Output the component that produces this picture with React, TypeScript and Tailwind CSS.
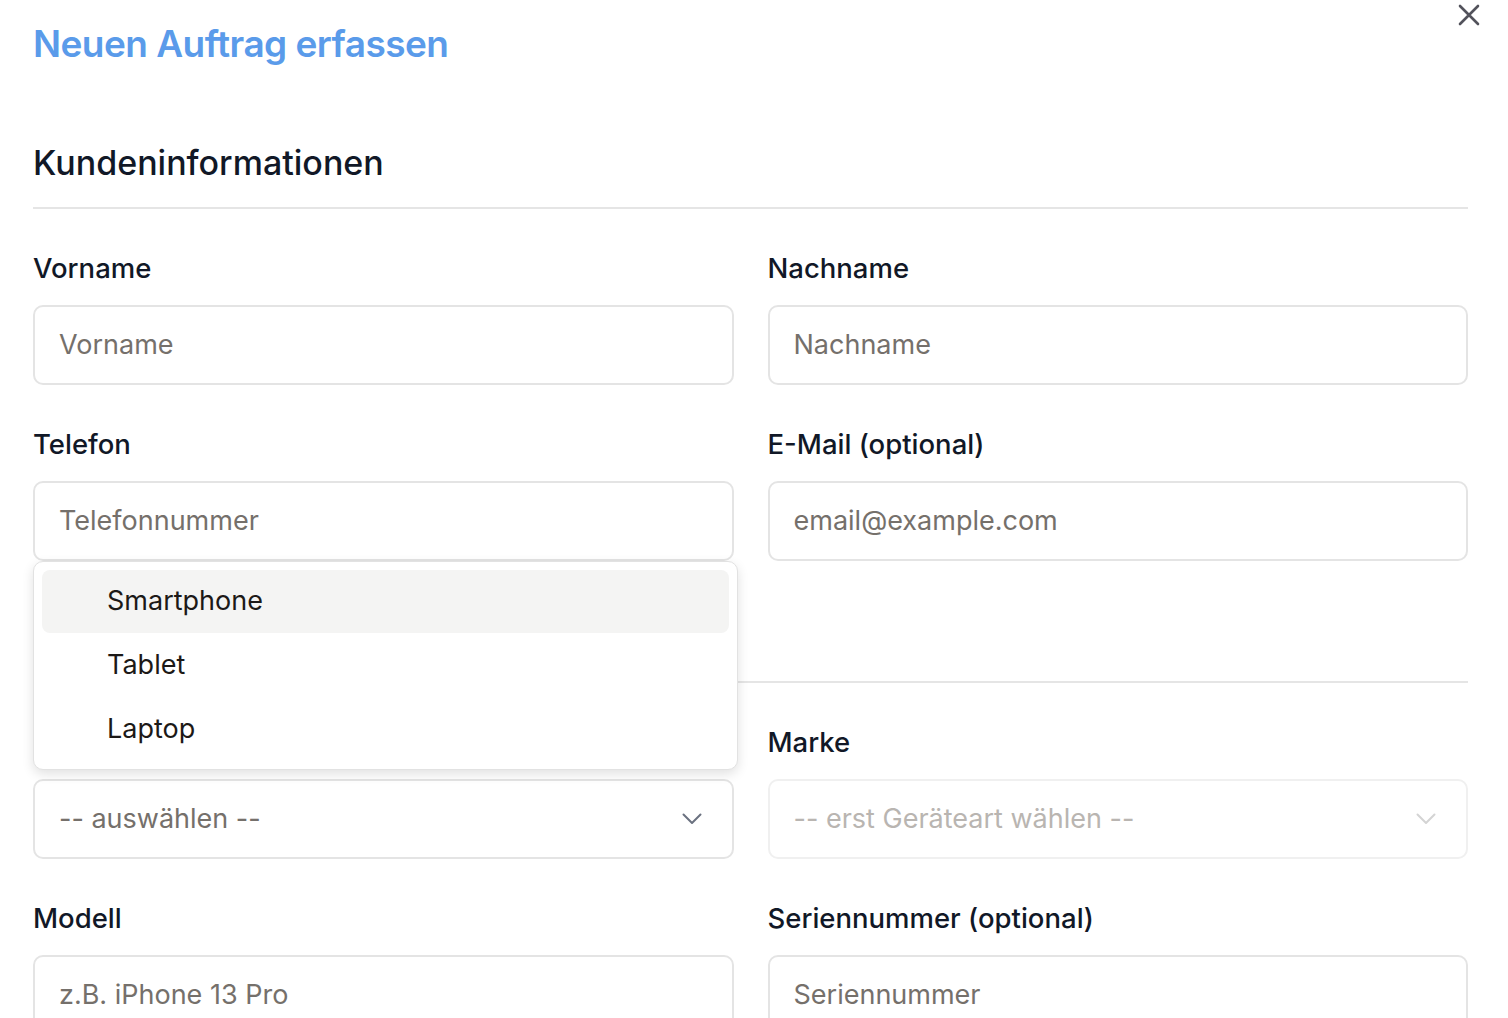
import React from 'react'

function Field({ label, placeholder }: { label: string; placeholder: string }) {
  return (
    <div className="flex flex-col">
      <label className="text-[27.5px] leading-[36px] font-medium text-[#111827] mb-[19px]">{label}</label>
      <div className="h-[80px] rounded-[10px] border-2 border-[#e4e4e4] bg-white flex items-center px-6">
        <span className="text-[27px] text-[#75706b]">{placeholder}</span>
      </div>
    </div>
  )
}

function SelectField({ label, placeholder, disabled }: { label: string; placeholder: string; disabled?: boolean }) {
  return (
    <div className="flex flex-col">
      <label className="text-[27.5px] leading-[36px] font-medium text-[#111827] mb-[19px]">{label}</label>
      <div
        className={
          disabled
            ? 'h-[80px] rounded-[10px] border-2 border-[#f0f0f0] bg-white flex items-center justify-between pl-6 pr-[30px]'
            : 'h-[80px] rounded-[10px] border-2 border-[#e4e4e4] bg-white flex items-center justify-between pl-6 pr-[30px]'
        }
      >
        <span className={disabled ? 'text-[27px] text-[#b9b5b1]' : 'text-[27px] text-[#75706b]'}>{placeholder}</span>
        <svg width="20" height="12" viewBox="0 0 20 12" fill="none">
          <path
            d="M1.5 1.5 L10 10 L18.5 1.5"
            stroke={disabled ? '#d4d4d4' : '#6b7280'}
            strokeWidth="2"
            strokeLinecap="round"
            strokeLinejoin="round"
          />
        </svg>
      </div>
    </div>
  )
}

function SectionHeading({ children }: { children: React.ReactNode }) {
  return (
    <h2 className="text-[34px] leading-[44px] font-medium text-[#111827] pb-[22px] border-b-2 border-[#e5e5e5] mb-[41px]">
      {children}
    </h2>
  )
}

export default function App() {
  return (
    <div className="relative w-full min-h-screen bg-white overflow-hidden font-['Inter',sans-serif] pl-[33px] pr-[40px] pt-5">
      {/* close */}
      <button className="absolute top-[4px] right-[28px] p-0">
        <svg width="22" height="22" viewBox="0 0 22 22" fill="none">
          <path d="M2 2 L20 20 M20 2 L2 20" stroke="#52525b" strokeWidth="2.6" strokeLinecap="round" />
        </svg>
      </button>

      <h1 className="text-[37px] leading-[48px] font-semibold text-[#5a9bea] tracking-[-0.55px]">Neuen Auftrag erfassen</h1>

      <section className="mt-[73px]">
        <SectionHeading>Kundeninformationen</SectionHeading>
        <div className="grid grid-cols-2 gap-x-[34px] gap-y-[41px]">
          <Field label="Vorname" placeholder="Vorname" />
          <Field label="Nachname" placeholder="Nachname" />
          <div className="relative">
            <Field label="Telefon" placeholder="Telefonnummer" />
            {/* open device type menu */}
            <div className="absolute left-0 top-[135px] w-[705px] z-10 bg-white rounded-[10px] border border-[#e2e2e2] shadow-[0_4px_12px_rgba(0,0,0,0.12)] p-2">
              <div className="h-[63px] rounded-[8px] bg-[#f4f4f3] flex items-center pl-[65px] text-[27px] text-[#1c1917]">Smartphone</div>
              <div className="h-[64px] flex items-center pl-[65px] text-[27px] text-[#1c1917]">Tablet</div>
              <div className="h-[64px] flex items-center pl-[65px] text-[27px] text-[#1c1917]">Laptop</div>
            </div>
          </div>
          <Field label="E-Mail (optional)" placeholder="email@example.com" />
        </div>
      </section>

      <section className="mt-[54px]">
        <SectionHeading>Geräteinformationen</SectionHeading>
        <div className="grid grid-cols-2 gap-x-[34px] gap-y-[41px]">
          <SelectField label="Geräteart" placeholder="-- auswählen --" />
          <SelectField label="Marke" placeholder="-- erst Geräteart wählen --" disabled />
          <Field label="Modell" placeholder="z.B. iPhone 13 Pro" />
          <Field label="Seriennummer (optional)" placeholder="Seriennummer" />
        </div>
      </section>
    </div>
  )
}
